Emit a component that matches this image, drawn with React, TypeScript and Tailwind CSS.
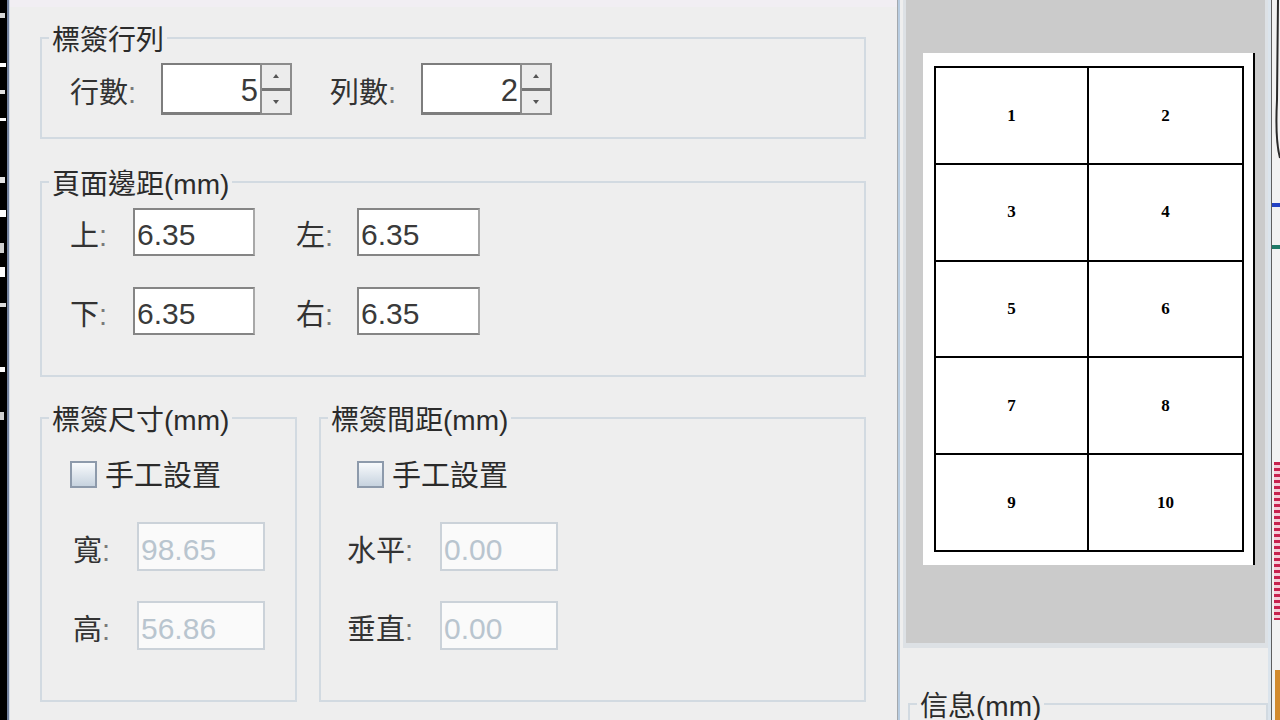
import React from 'react';

type BoxProps = { title: string; className?: string; children?: React.ReactNode };

function GroupBox({ title, className = '', children }: BoxProps) {
  return (
    <fieldset className={`min-w-0 border-2 border-[#d2dae1] ${className}`}>
      <legend className="ml-[7px] px-[3px] pt-[6px] text-[28px] leading-[28px] text-[#2b2b2b]">{title}</legend>
      {children}
    </fieldset>
  );
}

function Label({ text, className = '' }: { text: string; className?: string }) {
  return (
    <span className={`pt-[8px] text-[29px] leading-[32px] text-[#333333] ${className}`}>
      {text}
      <span className="text-[#7a7a7a]">:</span>
    </span>
  );
}

function TextField({ value, className = '' }: { value: string; className?: string }) {
  return (
    <div className={`flex items-center bg-white border-2 border-[#858585] border-r-[#a8a8a8] pl-[2px] pt-[5px] text-[30px] leading-[32px] text-[#3a3a3a] ${className}`}>
      {value}
    </div>
  );
}

function DisabledField({ value, className = '' }: { value: string; className?: string }) {
  return (
    <div className={`flex items-center bg-[#fafafa] border-2 border-[#cbd2d9] pl-[2px] pt-[7px] text-[30px] leading-[32px] text-[#b9c5cf] ${className}`}>
      {value}
    </div>
  );
}

function Arrow({ up = false }: { up?: boolean }) {
  return (
    <svg width="6" height="4" viewBox="0 0 6 4">
      <polygon points={up ? '3,0 6,4 0,4' : '0,0 6,0 3,4'} fill="#555555" />
    </svg>
  );
}

function Spinner({ value }: { value: string }) {
  return (
    <div className="flex h-[52px]">
      <div className="w-[99px] bg-white border-2 border-r-0 border-b-[3px] border-[#7d7d7d] flex items-center justify-end pr-[2px] pt-[4px] text-[31px] leading-[32px] text-[#3a3a3a]">
        {value}
      </div>
      <div className="w-[32px] flex flex-col border-2 border-[#8c8c8c] bg-[#ececec]">
        <div className="flex-1 flex items-center justify-center border-b-[3px] border-[#767676]">
          <Arrow up />
        </div>
        <div className="flex-1 flex items-center justify-center">
          <Arrow />
        </div>
      </div>
    </div>
  );
}

function ManualCheck({ className = '' }: { className?: string }) {
  return (
    <div className={`flex items-center h-[32px] ${className}`}>
      <span className="w-[27px] h-[27px] border-2 border-[#8d9aab] bg-linear-to-b from-[#f8fafc] to-[#c7d3df]" />
      <span className="ml-[8px] pt-[3px] text-[29px] leading-[32px] text-[#2b2b2b]">手工設置</span>
    </div>
  );
}

function LeftEdge() {
  return (
    <div className="w-[7px] bg-black flex flex-col">
      <div className="h-[13px]" />
      <div className="h-[5px] w-[5px] bg-[#d8d8d8]" />
      <div className="h-[45px]" />
      <div className="h-[4px] w-[6px] bg-white" />
      <div className="h-[23px]" />
      <div className="h-[4px] w-[5px] bg-[#e0e0e0]" />
      <div className="h-[24px]" />
      <div className="h-[3px] w-[6px] bg-white" />
      <div className="h-[56px]" />
      <div className="h-[6px] w-[5px] bg-[#e4e4e4]" />
      <div className="h-[27px]" />
      <div className="h-[7px] w-[6px] bg-white" />
      <div className="h-[26px]" />
      <div className="h-[10px] w-[4px] bg-[#d0d0d0]" />
      <div className="h-[14px]" />
      <div className="h-[10px] w-[5px] bg-white" />
      <div className="h-[26px]" />
      <div className="h-[4px] w-[6px] bg-[#dcdcdc]" />
      <div className="h-[60px]" />
      <div className="h-[5px] w-[5px] bg-white" />
      <div className="h-[40px]" />
      <div className="h-[8px] w-[4px] bg-[#cfcfcf]" />
    </div>
  );
}

function RightEdge() {
  return (
    <div className="w-[12px] flex">
      <div className="w-[3px] bg-[#dbe4ec]" />
      <div className="w-[1px] bg-[#5e5e5e]" />
      <div className="w-[8px] bg-[#f2f2f2] flex flex-col">
        <div className="h-[203px]">
          <svg width="8" height="160" viewBox="0 0 8 160">
            <path d="M6 0 L5 100 Q3 140 8 158" stroke="#2a2a2a" strokeWidth="2" fill="none" />
          </svg>
        </div>
        <div className="h-[4px] bg-[#2341c2]" />
        <div className="h-[38px]" />
        <div className="h-[4px] bg-[#1f7a68]" />
        <div className="h-[213px]" />
        <div className="h-[158px] ml-[2px] bg-[repeating-linear-gradient(180deg,#c8224e_0px,#c8224e_3px,#f3cdd8_3px,#f3cdd8_6px)]" />
        <div className="h-[50px]" />
        <div className="flex-1 ml-[3px] bg-[#d28a2e]" />
      </div>
    </div>
  );
}

export default function App() {
  return (
    <div className="w-[1280px] h-[720px] overflow-hidden flex bg-[#eeeeee] text-[#2b2b2b] font-['Liberation_Sans','Noto_Sans_CJK_TC',sans-serif]">
      <LeftEdge />
      <div className="w-[2px] bg-[#74839f]" />
      <div className="w-[1px] bg-[#d3dbe6]" />

      <main className="w-[887px] flex flex-col">
        <div className="h-[7px] bg-[#f1eef3]" />
        <div className="pl-[30px] pt-[14px] flex flex-col">
          <GroupBox title="標簽行列" className="w-[826px] pb-[22px]">
            <div className="mt-[8px] flex items-center pl-[28px]">
              <Label text="行數" className="w-[91px]" />
              <Spinner value="5" />
              <Label text="列數" className="ml-[38px] w-[91px]" />
              <Spinner value="2" />
            </div>
          </GroupBox>

          <GroupBox title="頁面邊距(mm)" className="mt-[26px] w-[826px] pb-[40px]">
            <div className="mt-[9px] flex items-center pl-[28px]">
              <Label text="上" className="w-[63px]" />
              <TextField value="6.35" className="w-[122px] h-[48px]" />
              <Label text="左" className="ml-[41px] w-[61px]" />
              <TextField value="6.35" className="w-[123px] h-[48px]" />
            </div>
            <div className="mt-[31px] flex items-center pl-[28px]">
              <Label text="下" className="w-[63px]" />
              <TextField value="6.35" className="w-[122px] h-[48px]" />
              <Label text="右" className="ml-[41px] w-[61px]" />
              <TextField value="6.35" className="w-[123px] h-[48px]" />
            </div>
          </GroupBox>

          <div className="mt-[24px] flex gap-[22px]">
            <GroupBox title="標簽尺寸(mm)" className="w-[257px] pb-[50px]">
              <ManualCheck className="mt-[23px] pl-[28px]" />
              <div className="mt-[32px] flex items-center pl-[31px]">
                <Label text="寬" className="w-[64px]" />
                <DisabledField value="98.65" className="w-[128px] h-[49px]" />
              </div>
              <div className="mt-[30px] flex items-center pl-[31px]">
                <Label text="高" className="w-[64px]" />
                <DisabledField value="56.86" className="w-[128px] h-[49px]" />
              </div>
            </GroupBox>

            <GroupBox title="標簽間距(mm)" className="w-[547px] pb-[50px]">
              <ManualCheck className="mt-[23px] pl-[36px]" />
              <div className="mt-[32px] flex items-center pl-[26px]">
                <Label text="水平" className="w-[93px]" />
                <DisabledField value="0.00" className="w-[118px] h-[49px]" />
              </div>
              <div className="mt-[30px] flex items-center pl-[26px]">
                <Label text="垂直" className="w-[93px]" />
                <DisabledField value="0.00" className="w-[118px] h-[49px]" />
              </div>
            </GroupBox>
          </div>
        </div>
      </main>

      <div className="w-[1px] bg-[#a3a8ad]" />
      <div className="w-[2px] bg-[#b8cce0]" />

      <aside className="w-[368px] pl-[3px] flex flex-col">
        <div className="w-[365px] h-[648px] shrink-0 border-l-[3px] border-r-[3px] border-b-[5px] border-[#dde1e5] bg-[#cbcbcb] pl-[17px] pt-[53px]">
          <div className="w-[332px] h-[512px] bg-white border-r-2 border-black pl-[11px] pt-[13px]">
            <div className="w-[310px] h-[486px] grid grid-cols-[151px_153px] grid-rows-5 gap-[2px] bg-black p-[2px]">
              {Array.from({ length: 10 }).map((_, i) => (
                <div
                  key={i}
                  className="bg-white flex items-center justify-center font-['Liberation_Serif',serif] font-bold text-[17px] text-black"
                >
                  {i + 1}
                </div>
              ))}
            </div>
          </div>
        </div>
        <GroupBox title="信息(mm)" className="ml-[5px] mt-[39px] w-[360px] h-[120px] shrink-0" />
      </aside>

      <RightEdge />
    </div>
  );
}
